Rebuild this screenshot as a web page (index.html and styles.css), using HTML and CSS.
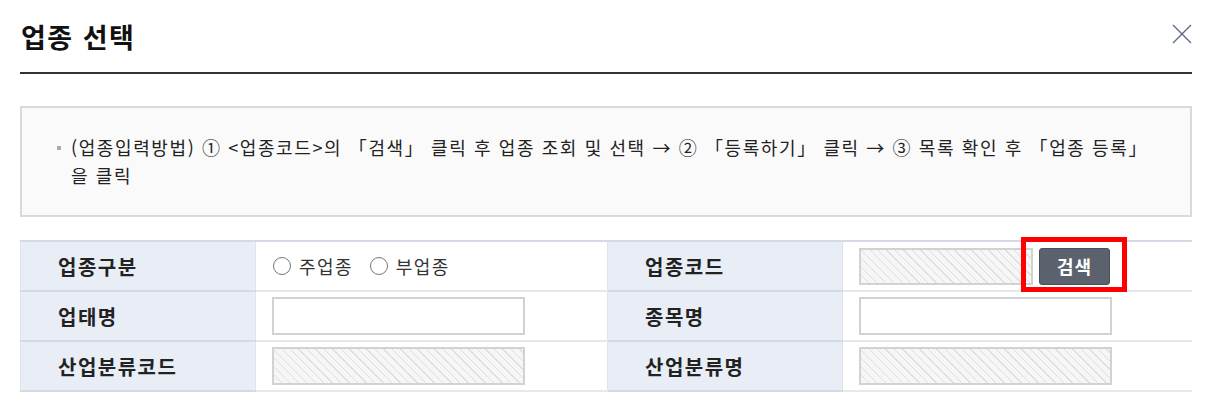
FILE: index.html
```html
<!DOCTYPE html>
<html lang="ko">
<head>
  <meta charset="UTF-8">
  <meta name="viewport" content="width=device-width, initial-scale=1.0">
  <title>업종 선택</title>
  <link rel="stylesheet" href="styles.css">
</head>
<body>
  <div class="modal">
    <div class="modal-head">
      <h2 class="modal-title">업종 선택</h2>
      <button class="close-btn" title="닫기">
        <svg width="20" height="20" viewBox="0 0 20 20">
          <path d="M1 1 L19 19 M19 1 L1 19" stroke="#5b6680" stroke-width="1.3" fill="none"/>
        </svg>
      </button>
    </div>

    <div class="guide">
      <p class="guide-text">(업종입력방법) ① &lt;업종코드&gt;의 「검색」 클릭 후 업종 조회 및 선택 → ② 「등록하기」 클릭 → ③ 목록 확인 후 「업종 등록」<br>을 클릭</p>
    </div>

    <table class="form-table">
      <colgroup>
        <col class="col-label">
        <col class="col-value">
        <col class="col-label">
        <col>
      </colgroup>
      <tr>
        <th>업종구분</th>
        <td>
          <label class="radio"><input type="radio" name="kind"> 주업종</label>
          <label class="radio"><input type="radio" name="kind"> 부업종</label>
        </td>
        <th>업종코드</th>
        <td>
          <div class="code-row">
            <input type="text" class="inp inp-code" readonly>
            <span class="search-wrap">
              <button class="search-btn">검색</button>
              <span class="highlight"></span>
            </span>
          </div>
        </td>
      </tr>
      <tr>
        <th>업태명</th>
        <td><input type="text" class="inp"></td>
        <th>종목명</th>
        <td><input type="text" class="inp"></td>
      </tr>
      <tr>
        <th>산업분류코드</th>
        <td><input type="text" class="inp" readonly></td>
        <th>산업분류명</th>
        <td><input type="text" class="inp" readonly></td>
      </tr>
    </table>
  </div>
</body>
</html>
```

FILE: styles.css
```css
body {
  margin: 0;
  padding: 0;
  background: #fff;
  color: #222;
  font-family: "Noto Sans CJK KR", "Noto Sans", sans-serif;
}
.modal {
  padding: 0 27px 0 20px;
}
.modal-head {
  height: 72px;
  display: flex;
  align-items: center;
  justify-content: space-between;
  border-bottom: 2px solid #333;
}
.modal-title {
  margin: 0 0 0 1px;
  font-size: 27px;
  font-weight: bold;
  color: #111;
  letter-spacing: 1.5px;
}
.close-btn {
  border: none;
  background: none;
  padding: 0;
  margin: 0 0 4px 0;
  width: 20px;
  height: 20px;
  cursor: pointer;
}
.guide {
  margin-top: 32px;
  height: 107px;
  border: 2px solid #dadada;
  background: #fafafa;
  box-sizing: content-box;
}
.guide-text {
  position: relative;
  margin: 0;
  padding: 25px 20px 0 49px;
  font-size: 18px;
  line-height: 28px;
  color: #222;
  letter-spacing: 1.6px;
}
.guide-text::before {
  content: "";
  position: absolute;
  left: 35px;
  top: 38px;
  width: 4px;
  height: 4px;
  background: #aaa;
}
.form-table {
  width: 100%;
  margin-top: 23px;
  border-collapse: collapse;
  table-layout: fixed;
  border-top: 2px solid #d5dbe4;
}
.col-label {
  width: 235px;
}
.col-value {
  width: 352px;
}
.form-table th,
.form-table td {
  height: 48px;
  border-bottom: 2px solid #e6e8ec;
  padding: 0;
  vertical-align: middle;
}
.form-table th {
  background: #e9eef6;
  border-bottom-color: #d5dbe4;
  border-left: 1px solid #dfe3ea;
  border-right: 1px solid #dfe3ea;
  text-align: left;
  padding-left: 37px;
  font-size: 20px;
  font-weight: bold;
  color: #222;
  letter-spacing: 1.5px;
}
.form-table td {
  padding-left: 16px;
}
.radio {
  display: inline-flex;
  align-items: center;
  margin-right: 11px;
  font-size: 18px;
  color: #333;
  letter-spacing: 1.5px;
}
.radio input {
  appearance: none;
  margin: 0 8px 0 1px;
  width: 18px;
  height: 18px;
  border: 1px solid #777;
  border-radius: 50%;
  background: #fff;
}
.inp {
  display: block;
  box-sizing: border-box;
  width: 253px;
  height: 38px;
  border: 2px solid #d2d2d2;
  background: #fff;
  margin: 0;
}
.inp[readonly] {
  background: repeating-linear-gradient(45deg, #f6f6f6 0, #f6f6f6 5px, #dedede 5px, #dedede 6px);
}
.code-row {
  display: flex;
  align-items: center;
  gap: 6px;
}
.inp-code {
  width: 174px;
  height: 37px;
}
.search-wrap {
  position: relative;
  display: inline-block;
}
.search-btn {
  display: block;
  width: 71px;
  height: 37px;
  border: 1px solid #4a505a;
  border-radius: 3px;
  background: #5c626d;
  color: #fff;
  font-family: inherit;
  font-size: 18px;
  font-weight: bold;
  letter-spacing: 1px;
  cursor: pointer;
}
.highlight {
  position: absolute;
  left: -18px;
  top: -11px;
  width: 96px;
  height: 45px;
  border: 5px solid #f00;
}
```
